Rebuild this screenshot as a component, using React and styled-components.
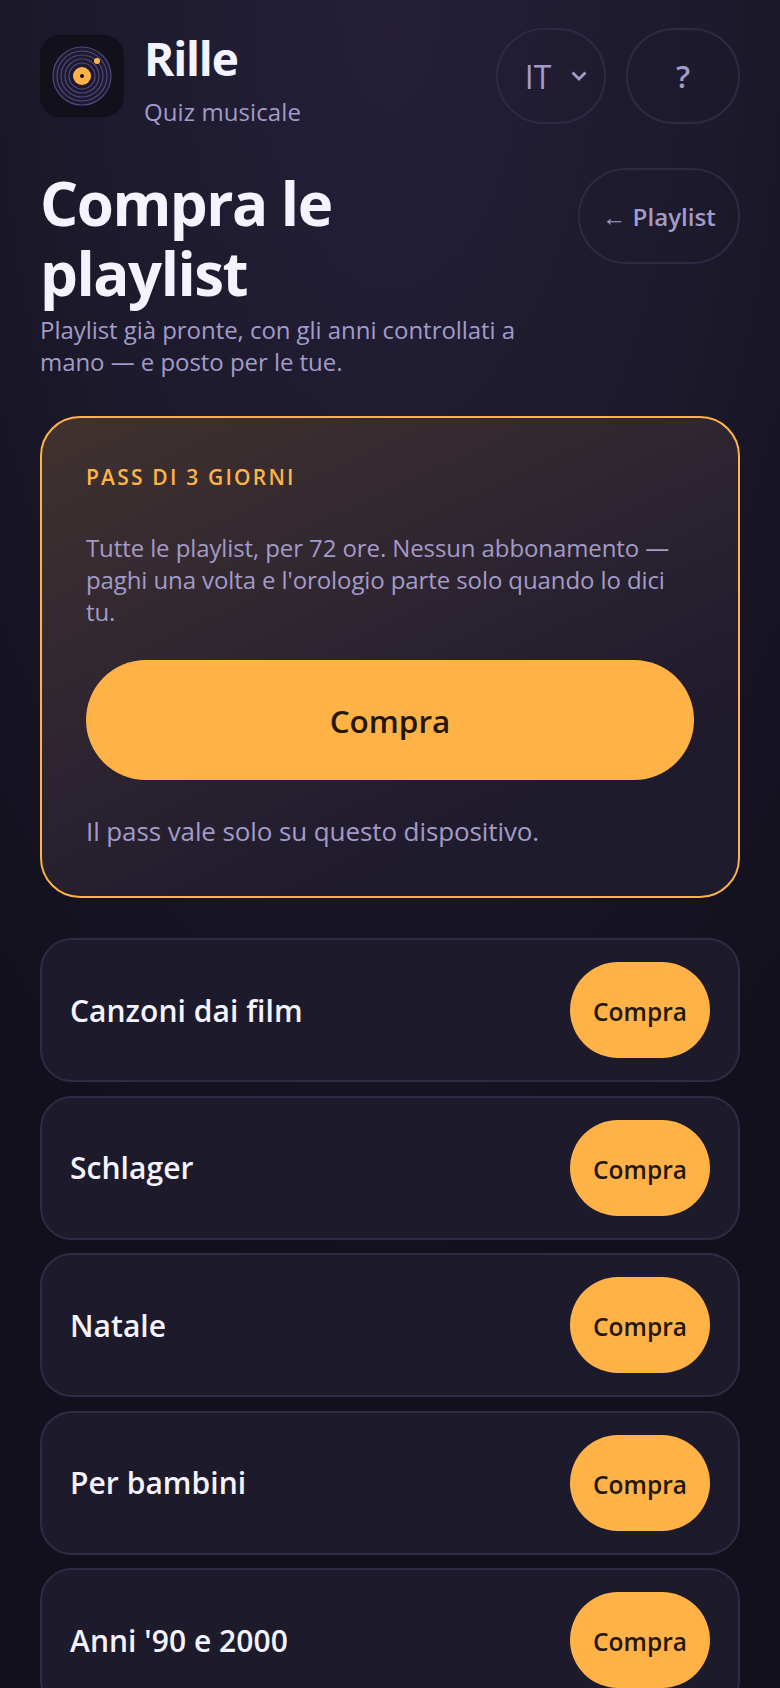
import React from 'react';
import styled, { createGlobalStyle } from 'styled-components';

//--------- GLOBAL ----------//
const GlobalStyle = createGlobalStyle`
  html, body {
    margin: 0;
    padding: 0;
    background: #12101c;
  }
  * {
    box-sizing: border-box;
  }
`;

//--------- STYLED COMPONENTS ----------//
const Page = styled.main`
  height: 1688px;
  overflow: hidden;
  padding: 28px 40px 0;
  font-family: 'Open Sans', 'Noto Sans', sans-serif;
  background: radial-gradient(ellipse 620px 1300px at 50% 0, #251f3a 0%, #1c1a2c 50%, #12101c 100%);
`;

const Header = styled.header`
  display: flex;
  justify-content: space-between;
  align-items: center;
  height: 96px;
`;

const Brand = styled.div`
  display: flex;
  align-items: center;
  gap: 20px;
`;

const LogoBox = styled.div`
  width: 84px;
  height: 82px;
  border-radius: 20px;
  background: #12101a;
  display: flex;
  align-items: center;
  justify-content: center;
`;

const BrandText = styled.div`
  display: flex;
  flex-direction: column;
  padding-top: 8px;
`;

const BrandName = styled.h1`
  margin: 0;
  font-size: 46px;
  line-height: 56px;
  font-weight: 700;
  letter-spacing: -1.2px;
  color: #f5f3ff;
`;

const BrandSub = styled.span`
  margin-top: 7px;
  font-size: 24px;
  line-height: 38px;
  letter-spacing: 0.1px;
  color: #a39bc8;
`;

const Controls = styled.div`
  display: flex;
  gap: 20px;
`;

const GhostButton = styled.button`
  height: 96px;
  width: ${(p) => p.$width}px;
  border: 2px solid #2e2a44;
  border-radius: 48px;
  background: transparent;
  color: #a39bc8;
  font-family: inherit;
  font-size: ${(p) => p.$size || 24}px;
  font-weight: ${(p) => p.$weight || 500};
  letter-spacing: ${(p) => p.$spacing || 0}px;
  display: flex;
  align-items: center;
  justify-content: center;
  gap: ${(p) => p.$gap || 0}px;
  padding: 0 0 0 ${(p) => p.$inset || 0}px;
`;

const TitleRow = styled.section`
  display: flex;
  justify-content: space-between;
  align-items: flex-start;
  margin-top: 44px;
`;

const Title = styled.h2`
  margin: 0;
  width: 400px;
  font-size: 60px;
  line-height: 70px;
  font-weight: 700;
  letter-spacing: -1.5px;
  color: #f5f3ff;
`;

const Intro = styled.p`
  margin: 6px 0 0;
  width: 480px;
  font-size: 24px;
  line-height: 32px;
  letter-spacing: -0.05px;
  color: #a39bc8;
`;

const PassCard = styled.section`
  margin-top: 38px;
  height: 482px;
  padding: 44px 44px 0;
  border: 2px solid #ffb347;
  border-radius: 40px;
  background: linear-gradient(155deg, #40322f 0%, #2c2430 45%, #1f1b2d 75%, #1e1b2c 100%);
`;

const PassLabel = styled.div`
  font-size: 21px;
  line-height: 30px;
  font-weight: 600;
  letter-spacing: 2.2px;
  color: #ffb347;
`;

const PassText = styled.p`
  margin: 40px 0 0;
  font-size: 24px;
  line-height: 32px;
  letter-spacing: -0.1px;
  color: #a39bc8;
`;

const BigBuy = styled.button`
  display: block;
  width: 100%;
  height: 120px;
  margin-top: 32px;
  border: 0;
  border-radius: 60px;
  background: #ffb347;
  color: #241705;
  font-family: inherit;
  font-size: 31.5px;
  font-weight: 550;
`;

const PassNote = styled.p`
  margin: 35px 0 0;
  font-size: 26px;
  line-height: 32px;
  letter-spacing: -0.1px;
  color: #a39bc8;
`;

const List = styled.ul`
  list-style: none;
  margin: 40px 0 0;
  padding: 0;
  display: flex;
  flex-direction: column;
  gap: 13.5px;
`;

const Row = styled.li`
  display: flex;
  align-items: center;
  justify-content: space-between;
  padding: 22px 28px;
  border: 2px solid #2e2b45;
  border-radius: 32px;
  background: #1d1b2b;
`;

const RowName = styled.span`
  font-size: 30px;
  font-weight: 600;
  letter-spacing: 0.05px;
  color: #f5f3ff;
`;

const BuyButton = styled.button`
  width: 140px;
  height: 96px;
  border: 0;
  border-radius: 48px;
  background: #ffb347;
  color: #241705;
  font-family: inherit;
  font-size: 24.5px;
  font-weight: 550;
  padding: 3px 0 0;
`;

//--------- ICONS ----------//
const RecordLogo = () => (
  <svg width="60" height="60" viewBox="0 0 60 60">
    <circle cx="30" cy="30" r="29" fill="#1e1a30" stroke="#51487c" strokeWidth="1.2" />
    <circle cx="30" cy="30" r="25" fill="none" stroke="#51487c" strokeWidth="1.2" />
    <circle cx="30" cy="30" r="21" fill="none" stroke="#51487c" strokeWidth="1.2" />
    <circle cx="30" cy="30" r="17" fill="none" stroke="#51487c" strokeWidth="1.2" />
    <circle cx="30" cy="30" r="13" fill="none" stroke="#51487c" strokeWidth="1.2" />
    <circle cx="30" cy="30" r="9" fill="#ffb347" />
    <circle cx="30" cy="30" r="2" fill="#12101a" />
    <circle cx="45" cy="15" r="3" fill="#ffb347" />
  </svg>
);

const Chevron = () => (
  <svg width="16" height="12" viewBox="0 0 16 12" fill="none">
    <path d="M1.5 2.5 L8 9 L14.5 2.5" stroke="#a39bc8" strokeWidth="2.8" />
  </svg>
);

//--------- APP ----------//
const playlists = ['Canzoni dai film', 'Schlager', 'Natale', 'Per bambini', "Anni '90 e 2000"];

const App = () => {
  return (
    <Page>
      <GlobalStyle />
      <Header>
        <Brand>
          <LogoBox>
            <RecordLogo />
          </LogoBox>
          <BrandText>
            <BrandName>Rille</BrandName>
            <BrandSub>Quiz musicale</BrandSub>
          </BrandText>
        </Brand>
        <Controls>
          <GhostButton $width={110} $size={32} $weight={500} $gap={20} $inset={10}>
            IT <Chevron />
          </GhostButton>
          <GhostButton $width={114} $size={31} $weight={600}>
            ?
          </GhostButton>
        </Controls>
      </Header>

      <TitleRow>
        <Title>Compra le playlist</Title>
        <GhostButton $width={162} $size={24.2} $weight={600}>
          ← Playlist
        </GhostButton>
      </TitleRow>
      <Intro>Playlist già pronte, con gli anni controllati a mano — e posto per le tue.</Intro>

      <PassCard>
        <PassLabel>PASS DI 3 GIORNI</PassLabel>
        <PassText>
          Tutte le playlist, per 72 ore. Nessun abbonamento — paghi una volta e l'orologio parte
          solo quando lo dici tu.
        </PassText>
        <BigBuy>Compra</BigBuy>
        <PassNote>Il pass vale solo su questo dispositivo.</PassNote>
      </PassCard>

      <List>
        {playlists.map((name) => (
          <Row key={name}>
            <RowName>{name}</RowName>
            <BuyButton>Compra</BuyButton>
          </Row>
        ))}
      </List>
    </Page>
  );
};

export default App;
